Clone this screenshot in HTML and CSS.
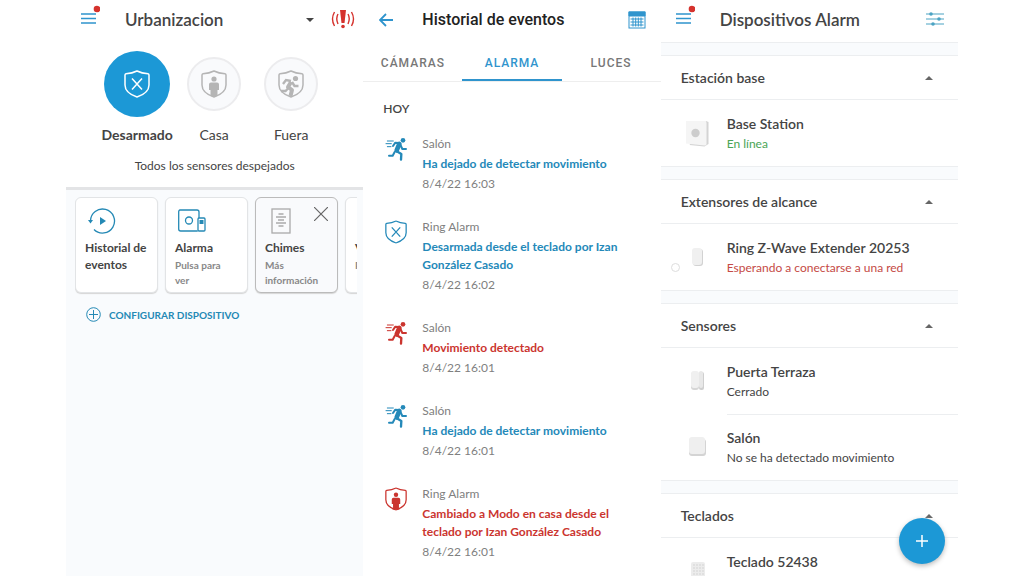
FILE: index.html
```html
<!DOCTYPE html>
<html lang="es">
<head>
  <meta charset="UTF-8">
  <meta name="viewport" content="width=device-width, initial-scale=1">
  <title>Urbanizacion</title>
  <link rel="stylesheet" href="styles.css">
</head>
<body>

  <!-- Shared icons -->
  <svg class="sprite" aria-hidden="true">
    <symbol id="menu" viewBox="0 0 20 28">
      <path d="M1 9h15M1 13.500h15M1 18h15" fill="none" stroke="#2f94cd" stroke-width="1.500"/>
      <circle cx="17" cy="4" r="3.300" fill="#d5322d"/>
    </symbol>
    <symbol id="shield" viewBox="0 0 26 28">
      <path d="M13 1C9.500 2.800 5.500 3.600 2 3.800Q1 4 1 5V15C1 21 7 25 13 27C19 25 25 21 25 15V5Q25 4 24 3.800C20.500 3.600 16.500 2.800 13 1z" fill="none" stroke="currentColor" stroke-width="1.500"/>
    </symbol>
    <symbol id="shield-x" viewBox="0 0 26 28">
      <use href="#shield"/>
      <path d="M8 8.500l10 11M18 8.500l-10 11" fill="none" stroke="currentColor" stroke-width="1.500"/>
    </symbol>
    <symbol id="shield-home" viewBox="0 0 26 28">
      <use href="#shield"/>
      <circle cx="13" cy="9" r="2.600" fill="currentColor"/>
      <path d="M10 12.500h6q2 0 2 2V20h-1.500v6l-3.500 1-3.500-1v-6H8v-5.500Q8 12.500 10 12.500z" fill="currentColor"/>
    </symbol>
    <symbol id="shield-away" viewBox="0 0 26 28">
      <use href="#shield"/>
      <circle cx="17.500" cy="8.500" r="2.600" fill="currentColor"/>
      <path d="M5 14l3-4 5 1M14 12l2.500 4h4M10.500 18l-3 3H3" fill="none" stroke="currentColor" stroke-width="2.400"/>
      <path d="M13 12l-3 5 4 3-1.500 6" fill="none" stroke="currentColor" stroke-width="4" stroke-linejoin="round"/>
    </symbol>
    <symbol id="runner" viewBox="0 0 66 70">
      <circle cx="54" cy="9" r="7" fill="currentColor"/>
      <g fill="none" stroke="currentColor" stroke-linecap="round" stroke-linejoin="round">
        <path d="M43 20L35 39" stroke-width="14"/>
        <path d="M42 17l-11-1-7 10M46 22l6 13h11M29 44l-6 11H12" stroke-width="6"/>
        <path d="M34 41l15 9-1 17" stroke-width="7"/>
        <path d="M7 11h18M3 19h16M7 28h11" stroke-width="3"/>
      </g>
    </symbol>
  </svg>

  <main class="screens">

    <section class="screen home">
      <header class="topbar">
        <button class="icon-btn" aria-label="Menu"><svg width="20" height="28"><use href="#menu"/></svg></button>
        <div class="location">
          <select aria-label="Ubicacion">
            <option>Urbanizacion</option>
          </select>
        </div>
        <button class="icon-btn" aria-label="Alerta">
          <svg width="24" height="20" viewBox="0 0 24 20">
            <path d="M9 1h6l-1.500 13h-3z" fill="#d5322d"/>
            <circle cx="12" cy="17.500" r="1.800" fill="#d5322d"/>
            <path d="M7 5q-2.500 4.500 0 10M3.500 3q-4 7 0 14M17 5q2.500 4.500 0 10M20.500 3q4 7 0 14" fill="none" stroke="#d5322d" stroke-width="1.400"/>
          </svg>
        </button>
      </header>

      <div class="modes">
        <button class="mode active">
          <span class="disc"><svg width="26" height="28"><use href="#shield-x"/></svg></span>
          Desarmado
        </button>
        <button class="mode">
          <span class="disc"><svg width="26" height="28"><use href="#shield-home"/></svg></span>
          Casa
        </button>
        <button class="mode">
          <span class="disc"><svg width="26" height="28"><use href="#shield-away"/></svg></span>
          Fuera
        </button>
      </div>
      <p class="status">Todos los sensores despejados</p>

      <div class="dashboard">
        <div class="cards">
          <article class="card">
            <svg width="28" height="28" viewBox="0 0 28 28" fill="none" stroke="#2489b5" stroke-width="1.300">
              <path d="M2.500 14A12 12 0 1 1 6 22.500"/>
              <path d="M0 13h5l-2.500 3.500z" fill="#2489b5" stroke="none"/>
              <path d="M12 10l6 4-6 4z" fill="#2489b5" stroke="none"/>
            </svg>
            <h3>Historial de eventos</h3>
          </article>
          <article class="card">
            <svg width="28" height="28" viewBox="0 0 28 28" fill="none" stroke="#2489b5" stroke-width="1.300">
              <path d="M21 11V5q0-2-2-2H2Q0.700 3 0.700 5v17q0 2 2 2h17"/>
              <circle cx="11" cy="13.500" r="3.500"/>
              <rect x="20" y="11" width="7" height="13" rx="1"/>
              <path d="M21.500 13h4v4h-4z" fill="#2489b5" stroke="none"/>
            </svg>
            <h3>Alarma</h3>
            <p>Pulsa para ver</p>
          </article>
          <article class="card muted">
            <svg width="28" height="28" viewBox="0 0 28 28" fill="none" stroke="#aaa" stroke-width="1.300">
              <rect x="4" y="2" width="18" height="24"/>
              <path d="M10.500 7h5M8 10h10M10 13h6M8 16h10M10.500 19h5"/>
            </svg>
            <button class="close" aria-label="Cerrar">
              <svg width="14" height="14" viewBox="0 0 14 14"><path d="M0 0l14 14M14 0L0 14" stroke="#666" stroke-width="1.200"/></svg>
            </button>
            <h3>Chimes</h3>
            <p>Más información</p>
          </article>
          <article class="card">
            <div class="blank"></div>
            <h3>V</h3>
            <p>P</p>
          </article>
        </div>
        <a class="setup" href="#">
          <svg width="15" height="15" viewBox="0 0 15 15" fill="none" stroke="#2489b5">
            <circle cx="7.500" cy="7.500" r="6.800"/>
            <path d="M7.500 3v9M3 7.500h9"/>
          </svg>
          CONFIGURAR DISPOSITIVO
        </a>
      </div>
    </section>

    <section class="screen history">
      <header class="topbar">
        <button class="icon-btn" aria-label="Volver">
          <svg width="14" height="14" viewBox="0 0 14 14"><path d="M14 7H1.500M7 1L1 7l6 6" fill="none" stroke="#2f94cd" stroke-width="1.800"/></svg>
        </button>
        <h1>Historial de eventos</h1>
        <button class="icon-btn" aria-label="Calendario">
          <svg width="18" height="18" viewBox="0 0 18 18" fill="none" stroke="#2f94cd">
            <rect x="1" y="1" width="16" height="16"/>
            <path d="M1 1h16v4H1z" fill="#2f94cd"/>
            <path d="M2.500 8h13M2.500 11h13M2.500 14h13M5 6.500v9M7.700 6.500v9M10.300 6.500v9M13 6.500v9"/>
          </svg>
        </button>
      </header>
      <nav class="tabs">
        <button>CÁMARAS</button>
        <button class="active">ALARMA</button>
        <button>LUCES</button>
      </nav>
      <h2>HOY</h2>
      <ul class="events">
        <li class="event">
          <svg width="22" height="24"><use href="#runner"/></svg>
          <div>
            <p>Salón</p>
            <h3>Ha dejado de detectar movimiento</h3>
            <p>8/4/22 16:03</p>
          </div>
        </li>
        <li class="event">
          <svg width="22" height="24"><use href="#shield-x"/></svg>
          <div>
            <p>Ring Alarm</p>
            <h3>Desarmada desde el teclado por Izan González Casado</h3>
            <p>8/4/22 16:02</p>
          </div>
        </li>
        <li class="event alert">
          <svg width="22" height="24"><use href="#runner"/></svg>
          <div>
            <p>Salón</p>
            <h3>Movimiento detectado</h3>
            <p>8/4/22 16:01</p>
          </div>
        </li>
        <li class="event">
          <svg width="22" height="24"><use href="#runner"/></svg>
          <div>
            <p>Salón</p>
            <h3>Ha dejado de detectar movimiento</h3>
            <p>8/4/22 16:01</p>
          </div>
        </li>
        <li class="event alert">
          <svg width="22" height="24"><use href="#shield-home"/></svg>
          <div>
            <p>Ring Alarm</p>
            <h3>Cambiado a Modo en casa desde el teclado por Izan González Casado</h3>
            <p>8/4/22 16:01</p>
          </div>
        </li>
      </ul>
    </section>

    <section class="screen devices">
      <header class="topbar">
        <button class="icon-btn" aria-label="Menu"><svg width="20" height="28"><use href="#menu"/></svg></button>
        <h1>Dispositivos Alarm</h1>
        <button class="icon-btn" aria-label="Filtros">
          <svg width="18" height="14" viewBox="0 0 18 14" stroke="#4ba3c3">
            <path d="M0 2h18M0 7h18M0 12h18"/>
            <g fill="#4ba3c3" stroke="none"><circle cx="5" cy="2" r="1.800"/><circle cx="13" cy="7" r="1.800"/><circle cx="7" cy="12" r="1.800"/></g>
          </svg>
        </button>
      </header>

      <div class="group">
        <h2><button>Estación base</button></h2>
        <div class="device">
          <svg width="30" height="30" viewBox="0 0 30 30">
            <path d="M23 3l2.500 1v22l-4 2.500-15-1.500z" fill="#d4d4d4"/>
            <path d="M3 3h19q1.500 0 1.500 2v21q0 1.500-2 1.500L3 25.500z" fill="#f5f5f5"/>
            <circle cx="12.500" cy="15" r="4.200" fill="#cdcdcd"/>
          </svg>
          <div>
            <h3>Base Station</h3>
            <p class="online">En línea</p>
          </div>
        </div>
      </div>

      <div class="group">
        <h2><button>Extensores de alcance</button></h2>
        <div class="device">
          <span class="ring"></span>
          <svg width="30" height="30" viewBox="0 0 30 30">
            <rect x="10" y="7" width="10" height="17" rx="3" fill="#d2d2d2"/>
            <rect x="9" y="6" width="10" height="17" rx="3" fill="#f0f0f0"/>
          </svg>
          <div>
            <h3>Ring Z-Wave Extender 20253</h3>
            <p class="error">Esperando a conectarse a una red</p>
          </div>
        </div>
      </div>

      <div class="group">
        <h2><button>Sensores</button></h2>
        <div class="device">
          <svg width="30" height="30" viewBox="0 0 30 30">
            <rect x="8" y="6" width="8" height="18" rx="3" fill="#d6d6d6"/>
            <rect x="8" y="5" width="8" height="17" rx="3" fill="#f0f0f0"/>
            <rect x="16" y="6" width="5" height="18" rx="2" fill="#cfcfcf"/>
            <rect x="16" y="5" width="4" height="17" rx="2" fill="#e8e8e8"/>
          </svg>
          <div>
            <h3>Puerta Terraza</h3>
            <p>Cerrado</p>
          </div>
        </div>
        <div class="device">
          <svg width="30" height="30" viewBox="0 0 30 30">
            <rect x="6" y="7" width="17" height="17" rx="3" fill="#d4d4d4"/>
            <rect x="6" y="5" width="16" height="17" rx="3" fill="#efefef"/>
          </svg>
          <div>
            <h3>Salón</h3>
            <p>No se ha detectado movimiento</p>
          </div>
        </div>
      </div>

      <div class="group">
        <h2><button>Teclados</button></h2>
        <div class="device">
          <svg width="30" height="30" viewBox="0 0 30 30">
            <rect x="8" y="6" width="14" height="20" rx="2" fill="#ececec"/>
            <path d="M10 9h11M10 12h11M10 15h11M10 18h11" stroke="#d4d4d4" stroke-dasharray="2 1"/>
          </svg>
          <div>
            <h3>Teclado 52438</h3>
          </div>
        </div>
      </div>

      <button class="fab" aria-label="Agregar">
        <svg width="14" height="14" viewBox="0 0 14 14"><path d="M7 1v12M1 7h12" stroke="#fff" stroke-width="1.500"/></svg>
      </button>
    </section>

  </main>

</body>
</html>
```
FILE: styles.css
```css
*, *::before {
  box-sizing: border-box;
}
body, h1, h2, h3, p, ul {
  margin: 0;
  padding: 0;
}
body {
  background: #fff;
  color: #444;
  font-family: Lato, "Noto Sans", sans-serif;
  font-size: 12px;
}
button, select {
  font: inherit;
  color: inherit;
  background: none;
  border: none;
  padding: 0;
  cursor: pointer;
}
svg {
  display: block;
  flex: none;
}
.sprite {
  position: absolute;
  width: 0;
  height: 0;
}

.screens {
  display: grid;
  grid-template-columns: repeat(3, minmax(0, 1fr));
  height: 100vh;
  padding: 0 66px;
  overflow: hidden;
}
.screen {
  position: relative;
  display: flex;
  flex-direction: column;
  min-height: 0;
  overflow: hidden;
}
.topbar {
  display: grid;
  grid-template-columns: 45px 1fr 24px;
  align-items: center;
  flex: none;
  height: 40px;
  padding: 0 8px 2px 14px;
}
.topbar h1, .topbar select {
  font-size: 17px;
  font-weight: 600;
  color: #444;
}
.icon-btn {
  display: flex;
  align-items: center;
}
.topbar .icon-btn:last-child {
  justify-content: center;
}

/* Home */
.location {
  position: relative;
}
.location select {
  width: 100%;
  appearance: none;
}
.location::after,
.group h2 button::after {
  content: "";
  border: 4px solid transparent;
}
.location::after {
  position: absolute;
  right: 17px;
  top: 9px;
  border-top-color: #444;
  pointer-events: none;
}
.modes {
  display: flex;
  justify-content: center;
  gap: 4px;
  padding: 10px 1px 0 0;
}
.mode {
  display: flex;
  flex-direction: column;
  align-items: center;
  width: 73px;
  font-size: 14px;
  line-height: 20px;
}
.disc {
  display: flex;
  align-items: center;
  justify-content: center;
  width: 54px;
  height: 54px;
  margin: 7px 0 14px;
  border: 2px solid #ececee;
  border-radius: 50%;
  background: #f9fafc;
  color: #b5b5b5;
}
.mode.active {
  font-weight: bold;
}
.active .disc {
  width: 66px;
  height: 66px;
  margin: 1px 0 8px;
  border: none;
  background: #1c98d6;
  color: #fff;
}
.status {
  padding: 12px 0;
  line-height: 18px;
  text-align: center;
}
.dashboard {
  flex: 1;
  padding: 7px 6px 0 9px;
  border-top: 3px solid #e3e4e6;
  background: #f9fbfd;
}
.cards {
  display: flex;
  gap: 7px;
  padding-bottom: 2px;
  overflow: hidden;
}
.card {
  position: relative;
  flex: none;
  width: 83px;
  height: 96px;
  padding: 9px 9px 0;
  border: 1px solid #e2e4e6;
  border-radius: 6px;
  background: #fff;
  box-shadow: 0 1px 1px #d5d5d5;
}
.card.muted {
  border-color: #bbb;
  background: #f9fafc;
}
.card svg, .blank {
  height: 28px;
  margin-left: 3px;
}
.card h3 {
  margin-top: 4px;
  font-size: 12px;
  line-height: 17px;
  color: #444;
}
.card p {
  width: min-content;
  min-width: 50px;
  font-size: 10px;
  font-weight: bold;
  line-height: 15px;
  color: #888;
  padding-top: 2px;
}
.card .close {
  position: absolute;
  top: 9px;
  right: 9px;
}
.card .close svg {
  height: 14px;
  margin: 0;
}
.setup {
  display: inline-flex;
  align-items: center;
  gap: 8px;
  margin: 12px 11px;
  font-size: 10px;
  font-weight: bold;
  color: #2489b5;
  text-decoration: none;
}

/* History */
.history .topbar h1 {
  font-family: Roboto, sans-serif;
  font-size: 16px;
  font-weight: 500;
  color: #222;
}
.history .topbar {
  padding: 0 12px 1px 16px;
  grid-template-columns: 43px 1fr 24px;
}
.tabs {
  display: grid;
  grid-template-columns: repeat(3, 1fr);
  height: 42px;
  border-bottom: 1px solid #eee;
  flex: none;
}
.tabs button {
  font-family: Roboto, sans-serif;
  font-weight: 500;
  letter-spacing: 1px;
  color: #777;
  padding-top: 6px;
  border-bottom: 2px solid transparent;
}
.tabs .active {
  color: #2f94cd;
  border-color: #2f94cd;
}
.history h2 {
  padding: 18px 20px 16px;
  font-size: 12px;
  line-height: 18px;
  font-weight: 600;
}
.events {
  list-style: none;
}
.event {
  display: flex;
  gap: 15px;
  padding: 0 22px 23px;
  color: #2489b9;
}
.event svg {
  margin-top: 3px;
}
.event p {
  line-height: 20px;
  color: #808080;
}
.event h3 {
  margin: 1px 0;
  font-size: 12px;
  line-height: 18px;
}
.event.alert {
  color: #cb352f;
}

/* Devices */
.devices .topbar {
  height: 42px;
  padding: 0 11px 4px 14px;
}
.group {
  flex: none;
}
.group::before {
  content: "";
  display: block;
  height: 14px;
  border: 1px solid #eceef0;
  border-width: 1px 0;
  background: #f9fbfd;
}
.group h2 {
  height: 44px;
  border-bottom: 1px solid #eceef0;
}
.group h2 button {
  display: flex;
  align-items: center;
  justify-content: space-between;
  width: 100%;
  height: 100%;
  padding: 0 25px 0 20px;
  font-size: 14px;
  font-weight: 600;
}
.group h2 button::after {
  margin-top: -4px;
  border-bottom-color: #666;
}
.device {
  position: relative;
  display: flex;
  align-items: center;
  gap: 14px;
  height: 66px;
  padding-left: 22px;
}
.device > div {
  flex: 1;
  height: 100%;
  padding-top: 14px;
}
.device + .device > div {
  padding-top: 13px;
  border-top: 1px solid #eceef0;
}
.device h3 {
  font-size: 14px;
  font-weight: 600;
  line-height: 20px;
}
.device p {
  line-height: 19px;
}
.device .online {
  color: #4aa555;
}
.device .error {
  color: #c54a45;
}
.ring {
  position: absolute;
  left: 10px;
  bottom: 18px;
  width: 9px;
  height: 9px;
  border: 1px solid #ddd;
  border-radius: 50%;
}
.fab {
  position: absolute;
  right: 13px;
  bottom: 12px;
  display: flex;
  align-items: center;
  justify-content: center;
  width: 46px;
  height: 46px;
  border-radius: 50%;
  background: #1c98d6;
  box-shadow: 0 2px 5px #bbb;
}
```
